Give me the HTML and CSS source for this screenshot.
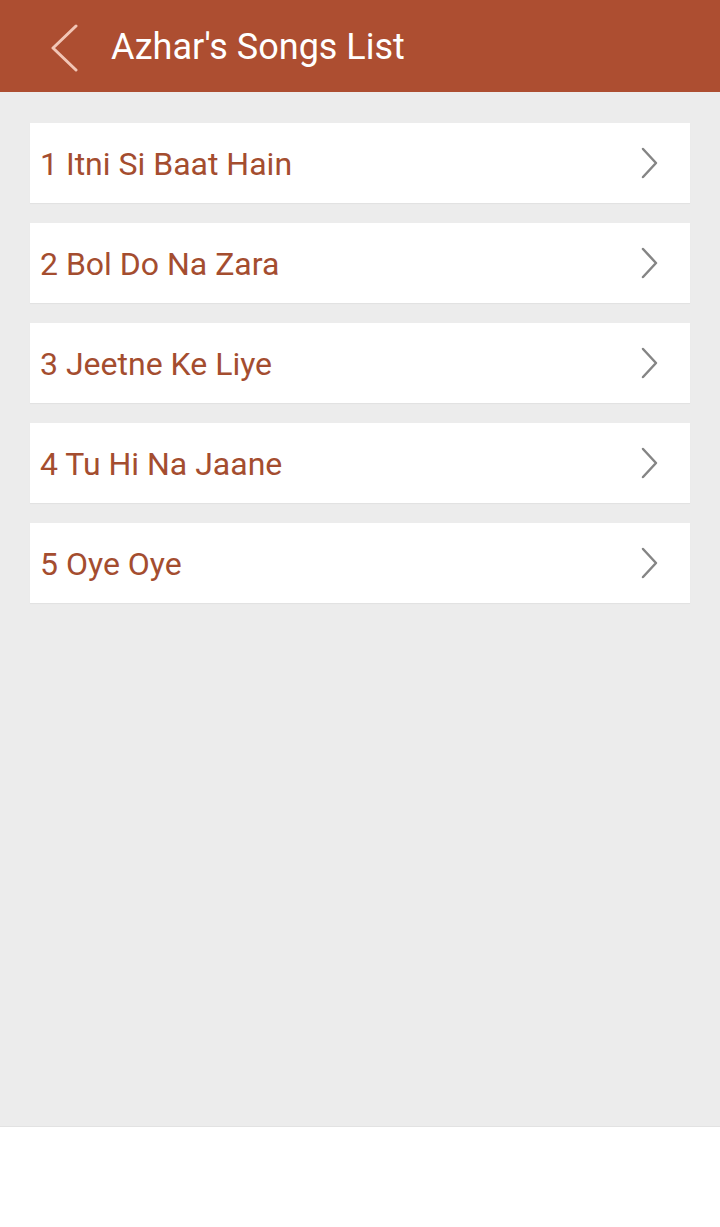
FILE: index.html
```html
<!DOCTYPE html>
<html lang="en">

<head>
    <meta charset="UTF-8">
    <meta name="viewport" content="width=device-width, initial-scale=1.0">
    <title>Azhar's Songs List</title>
    <link rel="stylesheet" href="styles.css">
</head>

<body>

    <div class="screen">
        <header class="toolbar">
            <svg class="back" width="30" height="50" viewBox="0 0 30 50">
                <polyline points="26,4 3,26 26,48" fill="none" stroke="#f2c6b6" stroke-width="3" stroke-linecap="round" stroke-linejoin="round" />
            </svg>
            <h1>Azhar's Songs List</h1>
        </header>

        <div class="list">
            <div class="item">
                <span>1 Itni Si Baat Hain</span>
                <svg class="arrow" width="20" height="32" viewBox="0 0 20 32">
                    <polyline points="3,2 16,16 3,30" fill="none" stroke="#858585" stroke-width="2.5" stroke-linecap="round" stroke-linejoin="round" />
                </svg>
            </div>
            <div class="item">
                <span>2 Bol Do Na Zara</span>
                <svg class="arrow" width="20" height="32" viewBox="0 0 20 32">
                    <polyline points="3,2 16,16 3,30" fill="none" stroke="#858585" stroke-width="2.5" stroke-linecap="round" stroke-linejoin="round" />
                </svg>
            </div>
            <div class="item">
                <span>3 Jeetne Ke Liye</span>
                <svg class="arrow" width="20" height="32" viewBox="0 0 20 32">
                    <polyline points="3,2 16,16 3,30" fill="none" stroke="#858585" stroke-width="2.5" stroke-linecap="round" stroke-linejoin="round" />
                </svg>
            </div>
            <div class="item">
                <span>4 Tu Hi Na Jaane</span>
                <svg class="arrow" width="20" height="32" viewBox="0 0 20 32">
                    <polyline points="3,2 16,16 3,30" fill="none" stroke="#858585" stroke-width="2.5" stroke-linecap="round" stroke-linejoin="round" />
                </svg>
            </div>
            <div class="item">
                <span>5 Oye Oye</span>
                <svg class="arrow" width="20" height="32" viewBox="0 0 20 32">
                    <polyline points="3,2 16,16 3,30" fill="none" stroke="#858585" stroke-width="2.5" stroke-linecap="round" stroke-linejoin="round" />
                </svg>
            </div>
        </div>
    </div>

</body>

</html>
```

FILE: styles.css
```css
body {
    font-family: Roboto, "Noto Sans", sans-serif;
    margin: 0;
    padding: 0;
    background-color: #ffffff;
}

.screen {
    height: 1127px;
    background-color: #ececec;
    border-bottom: 1px solid #e2e2e2;
    box-sizing: border-box;
}

.toolbar {
    height: 92px;
    background-color: #ad4e31;
    display: flex;
    align-items: center;
    padding-left: 50px;
}

.back {
    display: block;
    margin-top: 2px;
}

.toolbar h1 {
    margin: 2px 0 0 31px;
    color: #ffffff;
    font-size: 36px;
    font-weight: 400;
}

.list {
    padding: 31px 30px 0;
    display: flex;
    flex-direction: column;
    gap: 20px;
}

.item {
    height: 80px;
    background-color: #ffffff;
    box-shadow: 0 1px 1px rgba(0, 0, 0, 0.04);
    display: flex;
    align-items: center;
    justify-content: space-between;
    padding: 0 30px 0 10px;
    color: #a44d2f;
    font-size: 32px;
}

.item span {
    padding-top: 2px;
}

.arrow {
    display: block;
}
```
